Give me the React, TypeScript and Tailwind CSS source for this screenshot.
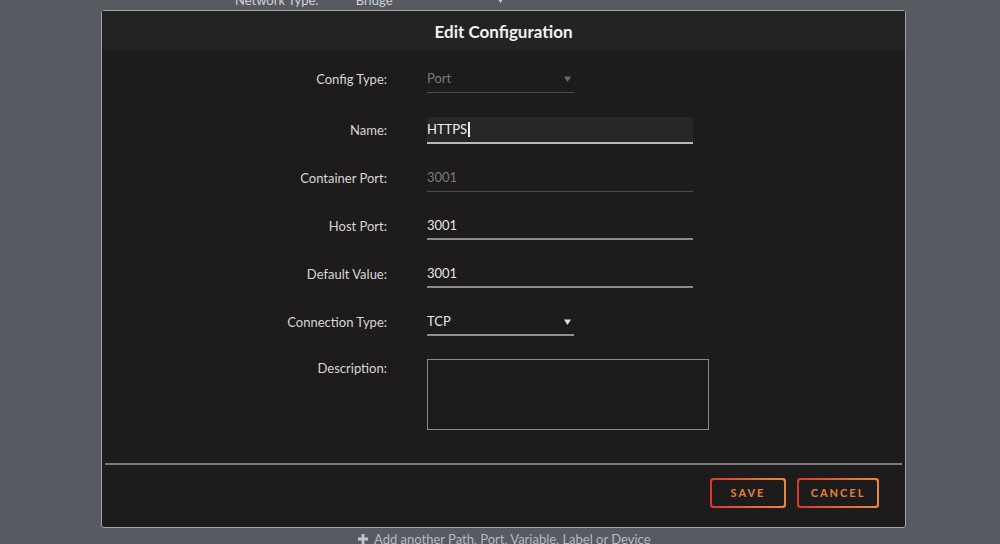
import React from "react";

function Caret({ className = "" }: { className?: string }) {
  return (
    <svg width="7" height="6" viewBox="0 0 7 6" className={className}>
      <path d="M0 0.5 L7 0.5 L3.5 6 Z" fill="currentColor" />
    </svg>
  );
}

function Row({ label, children, h = "h-[48px]" }: { label: string; children: React.ReactNode; h?: string }) {
  return (
    <div className={`flex ${h}`}>
      <div className="w-[285px] shrink-0 text-right text-[13px] leading-[27px] text-[#d6d6d6]">{label}</div>
      <div className="ml-[40px]">{children}</div>
    </div>
  );
}

function Field({ value, variant = "normal" }: { value: string; variant?: "normal" | "muted" | "focus" }) {
  const styles = {
    normal: "border-b-2 border-[#8a8a8a] text-[#e6e6e6]",
    muted: "border-b border-[#4a4a4a] text-[#7a7a7a]",
    focus: "border-b-2 border-[#b9b9b9] bg-[#262626] text-[#f0f0f0]",
  }[variant];
  return (
    <div className={`h-[27px] w-[266px] text-[13px] leading-[25px] ${styles}`}>
      {value}
      {variant === "focus" && <span className="ml-[1px] inline-block h-[15px] w-[1.5px] translate-y-[3px] bg-[#f0f0f0]" />}
    </div>
  );
}

function Select({ value, muted = false }: { value: string; muted?: boolean }) {
  return (
    <div
      className={`flex h-[27px] w-[147px] items-center justify-between text-[13px] ${
        muted ? "border-b border-[#4a4a4a] text-[#7a7a7a]" : "border-b-2 border-[#8f8f8f] text-[#e6e6e6]"
      }`}
    >
      <span>{value}</span>
      <Caret className={`mr-[3px] ${muted ? "text-[#6a6a6a]" : "text-[#dcdcdc]"}`} />
    </div>
  );
}

function OutlineButton({ label, w }: { label: string; w: string }) {
  return (
    <div className={`rounded-[3px] bg-gradient-to-r from-[#d6372b] to-[#e8893c] p-[2px] ${w}`}>
      <div className="flex h-[26px] items-center justify-center rounded-[2px] bg-[#1d1b1c] text-[11px] font-bold tracking-[2px] text-[#e3823d]">
        {label}
      </div>
    </div>
  );
}

export default function App() {
  return (
    <div
      className="flex h-[544px] w-[1000px] flex-col overflow-hidden bg-[#575b61]"
      style={{ fontFamily: "Lato, 'Open Sans', sans-serif" }}
    >
      {/* page behind the dialog, scrolled so only the bottom of this row shows */}
      <div className="flex h-[10px] shrink-0 items-end text-[13px] leading-[16px] text-[#d0d3d7]">
        <div className="mb-[2px] flex h-[16px] items-center">
          <span className="ml-[235px]">Network Type:</span>
          <span className="ml-[37px]">Bridge</span>
          <Caret className="ml-[104px] text-[#d0d3d7]" />
        </div>
      </div>

      <div className="ml-[101px] flex h-[518px] w-[805px] shrink-0 flex-col rounded-[3px] border border-[#a5a5a5] bg-[#1d1b1c]">
        <div className="flex h-[39px] shrink-0 items-center justify-center bg-[#232323] pt-[2px] text-[17px] font-bold text-[#f2f2f2]">
          Edit Configuration
        </div>

        <div className="flex flex-1 flex-col pt-[16px]">
          <Row label="Config Type:" h="h-[51px]">
            <Select value="Port" muted />
          </Row>
          <Row label="Name:">
            <Field value="HTTPS" variant="focus" />
          </Row>
          <Row label="Container Port:">
            <Field value="3001" variant="muted" />
          </Row>
          <Row label="Host Port:">
            <Field value="3001" />
          </Row>
          <Row label="Default Value:">
            <Field value="3001" />
          </Row>
          <Row label="Connection Type:" h="h-[46px]">
            <Select value="TCP" />
          </Row>
          <Row label="Description:" h="h-[76px]">
            <div className="mt-[4px] h-[71px] w-[282px] border border-[#8a8a8a]" />
          </Row>
        </div>

        <div className="mx-[3px] h-[2px] bg-[#7a7a7a]" />
        <div className="flex h-[62px] shrink-0 items-start justify-end gap-[11px] pr-[26px] pt-[13px]">
          <OutlineButton label="SAVE" w="w-[76px]" />
          <OutlineButton label="CANCEL" w="w-[82px]" />
        </div>
      </div>

      <div className="flex h-[16px] items-start">
        <div className="ml-[358px] mt-[3px] flex items-center gap-[6px] text-[13px] leading-[16px] text-[#b4b9bf]">
          <svg width="10" height="10" viewBox="0 0 10 10">
            <path d="M3.6 0h2.8v3.6H10v2.8H6.4V10H3.6V6.4H0V3.6h3.6z" fill="#c3c7cc" />
          </svg>
          <span>Add another Path, Port, Variable, Label or Device</span>
        </div>
      </div>
    </div>
  );
}
